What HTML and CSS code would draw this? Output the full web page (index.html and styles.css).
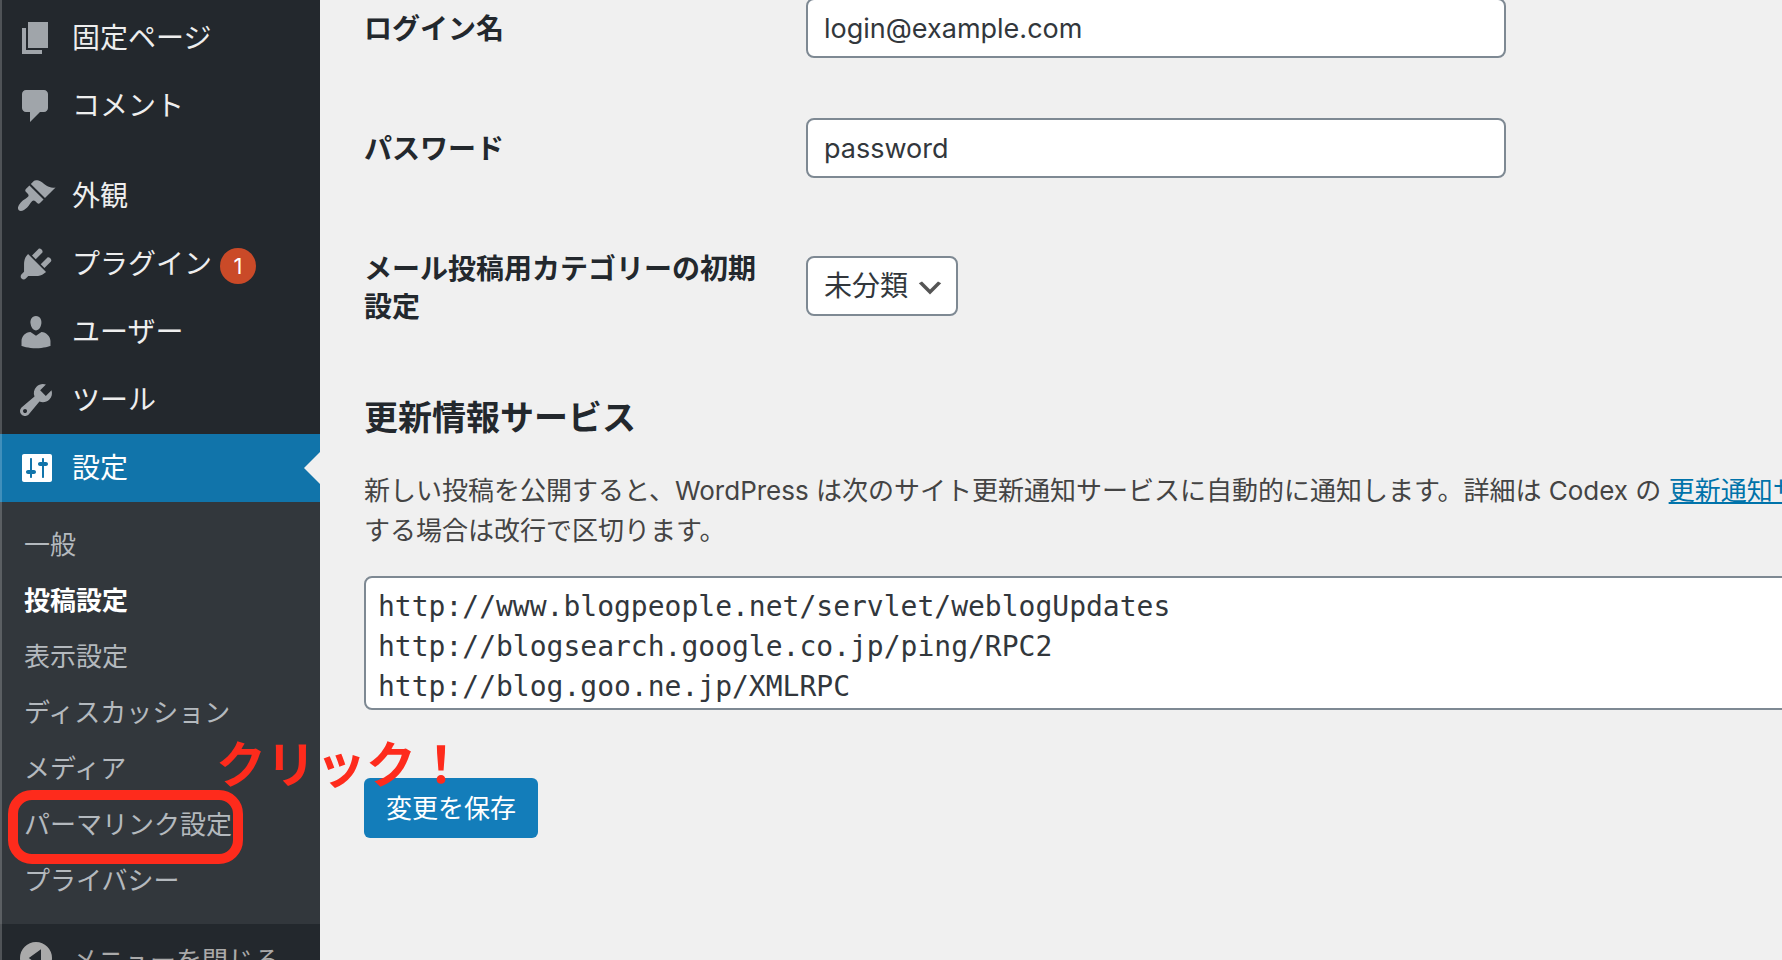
FILE: index.html
```html
<!DOCTYPE html>
<html lang="ja">

<head>
    <meta charset="utf-8">
    <title>投稿設定</title>
    <meta name="viewport" content="width=device-width, initial-scale=1.0">
    <link rel="stylesheet" href="styles.css">
</head>

<body>
    <div class="wrap">
        <nav class="sidebar">
            <ul class="menu">
                <li>
                    <a class="menu-link" href="#">
                        <svg class="icon" viewBox="0 0 20 20"><path d="M6 15V2h10v13H6zm-1 1h8v2H3V5h2v11z"/></svg>
                        固定ページ
                    </a>
                </li>
                <li>
                    <a class="menu-link" href="#">
                        <svg class="icon" viewBox="0 0 20 20"><path d="M5 2h9c1.1 0 2 .9 2 2v7c0 1.1-.9 2-2 2h-2l-5 5v-5H5c-1.1 0-2-.9-2-2V4c0-1.1.9-2 2-2z"/></svg>
                        コメント
                    </a>
                </li>
                <li class="separator"></li>
                <li>
                    <a class="menu-link" href="#">
                        <svg class="icon" viewBox="0 0 20 20"><path d="M14.48 11.06L7.41 3.99l1.5-1.5c.5-.56 2.3-.47 3.51.32 1.21.8 1.43 1.28 2.91 2.1 1.18.64 2.45 1.26 4.45.85zm-.71.71L6.7 4.7 4.93 6.47c-.39.39-.39 1.02 0 1.41l1.06 1.06c.39.39.39 1.03 0 1.42-.6.6-1.43 1.11-2.21 1.69-.35.26-.7.53-1.01.84C1.43 14.23.4 16.08 1.4 17.07c.99 1 2.84-.03 4.18-1.36.31-.31.58-.66.85-1.02.57-.78 1.08-1.61 1.69-2.21.39-.39 1.02-.39 1.41 0l1.06 1.06c.39.39 1.02.39 1.41 0z"/></svg>
                        外観
                    </a>
                </li>
                <li>
                    <a class="menu-link" href="#">
                        <svg class="icon" viewBox="0 0 20 20"><path d="M13.11 4.36L9.87 7.6 8 5.73l3.24-3.24c.35-.34 1.05-.2 1.56.32.52.51.66 1.21.31 1.55zm-8 1.77l.91-1.12 9.01 9.01-1.19.84c-.71.71-2.63 1.16-3.82 1.16H6.14L4.9 17.26c-.59.59-1.54.59-2.12 0-.59-.58-.59-1.53 0-2.12l1.24-1.24v-3.88c0-1.13.4-3.19 1.09-3.89zm7.26 3.97l3.24-3.24c.34-.35 1.04-.21 1.55.31.52.51.66 1.21.31 1.55l-3.24 3.25z"/></svg>
                        プラグイン
                        <span class="badge">1</span>
                    </a>
                </li>
                <li>
                    <a class="menu-link" href="#">
                        <svg class="icon" viewBox="0 0 20 20"><path d="M10 9.25c-2.27 0-2.73-3.44-2.73-3.44C7 4.02 7.82 2 9.97 2c2.16 0 2.98 2.02 2.71 3.81 0 0-.41 3.44-2.68 3.44zm0 2.57L12.72 10c2.39 0 4.52 2.33 4.52 4.53v2.49s-3.65 1.13-7.24 1.13c-3.65 0-7.24-1.13-7.24-1.13v-2.49c0-2.25 1.94-4.48 4.47-4.48z"/></svg>
                        ユーザー
                    </a>
                </li>
                <li>
                    <a class="menu-link" href="#">
                        <svg class="icon" viewBox="0 0 20 20"><path d="M16.68 9.77c-1.34 1.34-3.3 1.67-4.95.99l-5.41 6.52c-.99.99-2.59.99-3.58 0s-.99-2.59 0-3.57l6.52-5.42c-.68-1.65-.35-3.61.99-4.95 1.28-1.28 3.12-1.62 4.72-1.06l-2.89 2.89 2.82 2.82 2.86-2.87c.53 1.58.18 3.39-1.08 4.65zM3.81 16.21c.4.39 1.04.39 1.43 0 .4-.4.4-1.04 0-1.43-.39-.4-1.03-.4-1.43 0-.39.39-.39 1.03 0 1.43z"/></svg>
                        ツール
                    </a>
                </li>
                <li>
                    <a class="menu-link current" href="#">
                        <svg class="icon" viewBox="0 0 20 20"><path d="M18 16V4c0-.55-.45-1-1-1H4c-.55 0-1 .45-1 1v12c0 .55.45 1 1 1h13c.55 0 1-.45 1-1zM8 11h1c.55 0 1 .45 1 1s-.45 1-1 1H8v1.5c0 .28-.22.5-.5.5s-.5-.22-.5-.5V13H6c-.55 0-1-.45-1-1s.45-1 1-1h1V5.5c0-.28.22-.5.5-.5s.5.22.5.5V11zm5-2h-1c-.55 0-1-.45-1-1s.45-1 1-1h1V5.5c0-.28.22-.5.5-.5s.5.22.5.5V7h1c.55 0 1 .45 1 1s-.45 1-1 1h-1v5.5c0 .28-.22.5-.5.5s-.5-.22-.5-.5V9z"/></svg>
                        設定
                    </a>
                    <ul class="submenu">
                        <li><a href="#">一般</a></li>
                        <li><a class="active" href="#">投稿設定</a></li>
                        <li><a href="#">表示設定</a></li>
                        <li><a href="#">ディスカッション</a></li>
                        <li><a href="#">メディア</a></li>
                        <li class="marked">
                            <a href="#">パーマリンク設定</a>
                            <span class="mark-frame"></span>
                            <strong class="mark-text">クリック！</strong>
                        </li>
                        <li><a href="#">プライバシー</a></li>
                    </ul>
                </li>
            </ul>
            <button type="button" class="menu-link collapse">
                <svg class="icon" viewBox="0 0 20 20"><path fill-rule="evenodd" d="M10 2a8 8 0 1 0 0 16a8 8 0 1 0 0-16zM12.500 5.600v8.800L6.400 10z"/></svg>
                メニューを閉じる
            </button>
        </nav>

        <main class="content">
            <form>
                <table class="form-table">
                    <tr>
                        <th><label for="login">ログイン名</label></th>
                        <td><input type="text" id="login" value="login@example.com"></td>
                    </tr>
                    <tr>
                        <th><label for="pass">パスワード</label></th>
                        <td><input type="text" id="pass" value="password"></td>
                    </tr>
                    <tr>
                        <th><label for="category">メール投稿用カテゴリーの初期設定</label></th>
                        <td>
                            <span class="select-box">
                                <select id="category">
                                    <option>未分類</option>
                                </select>
                                <svg class="chevron" viewBox="0 0 20 20"><path d="M5 6l5 5 5-5 2 1-7 7-7-7 2-1z"/></svg>
                            </span>
                        </td>
                    </tr>
                </table>

                <h2>更新情報サービス</h2>
                <p class="description"><label for="ping">新しい投稿を公開すると、WordPress は次のサイト更新通知サービスに自動的に通知します。詳細は Codex の</label> <a href="#">更新通知サービス</a><br>する場合は改行で区切ります。</p>
                <textarea id="ping" rows="3">http://www.blogpeople.net/servlet/weblogUpdates
http://blogsearch.google.co.jp/ping/RPC2
http://blog.goo.ne.jp/XMLRPC</textarea>
                <button type="submit" class="submit">変更を保存</button>
            </form>
        </main>
    </div>
</body>

</html>
```
FILE: styles.css
```css
* {
    box-sizing: border-box;
}

body {
    margin: 0;
    background: #f0f0f0;
    color: #444;
    font-family: Inter, "Noto Sans CJK JP", sans-serif;
    font-size: 26px;
    line-height: 40px;
}

.wrap {
    display: flex;
    height: 100vh;
    overflow: hidden;
}

/* sidebar */

.sidebar {
    position: relative;
    z-index: 1;
    flex: 0 0 320px;
    padding-top: 4px;
    background: #23282d;
}

/* light edge on the left of the menu */
.sidebar::before {
    content: "";
    position: absolute;
    top: 0;
    bottom: 0;
    left: 0;
    z-index: 1;
    width: 2px;
    background: rgba(255, 255, 255, 0.2);
}

.menu,
.submenu {
    margin: 0;
    padding: 0;
    list-style: none;
}

.menu-link {
    position: relative;
    display: flex;
    align-items: center;
    width: 100%;
    height: 68px;
    padding: 0 16px;
    color: #eee;
    font-size: 28px;
    text-decoration: none;
}

.icon {
    width: 40px;
    height: 40px;
    margin-right: 16px;
    fill: #a0a5aa;
}

.separator {
    height: 22px;
}

.badge {
    width: 36px;
    height: 36px;
    margin: 4px 0 0 8px;
    border-radius: 50%;
    background: #ca4a28;
    color: #fff;
    font-size: 22px;
    line-height: 36px;
    text-align: center;
}

.current {
    background: #1174aa;
    color: #fff;
}

.current .icon {
    fill: #fff;
}

.current::after {
    content: "";
    position: absolute;
    top: 18px;
    right: 0;
    border: 16px solid transparent;
    border-left: 0;
    border-right-color: #f0f0f0;
}

.submenu {
    padding: 15px 0;
    background: #32373c;
}

.submenu a {
    display: block;
    padding: 8px 24px;
    color: #b4b9be;
    text-decoration: none;
}

.submenu .active {
    color: #fff;
    font-weight: bold;
}

.marked {
    position: relative;
}

.mark-frame {
    position: absolute;
    top: -7px;
    left: 8px;
    width: 235px;
    height: 74px;
    border: 10px solid #fe2b1c;
    border-radius: 24px;
}

.mark-text {
    position: absolute;
    top: -62px;
    left: 216px;
    color: #fe2b1c;
    font-size: 50px;
    line-height: 60px;
    white-space: nowrap;
}

.collapse {
    border: 0;
    background: none;
    color: #aaa;
    font-family: inherit;
    font-size: 26px;
}

.collapse .icon {
    fill: #aaa;
}

/* settings form */

.content {
    flex: 1;
    min-width: 0;
    padding-left: 44px;
    overflow: hidden;
}

.form-table {
    width: 100%;
    margin-top: -32px;
    border-collapse: collapse;
}

.form-table th {
    width: 422px;
    padding: 42px 20px 38px 0;
    color: #23282d;
    font-size: 28px;
    line-height: 38px;
    text-align: left;
    vertical-align: top;
}

.form-table td {
    padding: 30px 20px;
}

input,
select,
textarea {
    display: block;
    border: 2px solid #7e8993;
    border-radius: 8px;
    background: #fff;
    color: #32373c;
    font-family: inherit;
    font-size: 28px;
}

input {
    width: 700px;
    max-width: 100%;
    height: 60px;
    padding: 0 16px;
    font-size: 27px;
}

.select-box {
    position: relative;
    display: inline-block;
    vertical-align: middle;
}

select {
    width: 152px;
    height: 60px;
    padding: 0 48px 0 16px;
    appearance: none;
}

.chevron {
    position: absolute;
    top: 16px;
    right: 12px;
    width: 32px;
    height: 32px;
    fill: #555;
    pointer-events: none;
}

h2 {
    margin: 35px 0 34px;
    color: #23282d;
    font-size: 34px;
    line-height: 38px;
}

.description {
    margin: 0 0 25px;
    white-space: nowrap;
}

.description a {
    color: #0073aa;
}

textarea {
    width: 110%;
    height: 134px;
    padding: 9px 12px 3px;
    font-family: "DejaVu Sans Mono", monospace;
    line-height: 40px;
    resize: none;
    overflow: hidden;
}

.submit {
    height: 60px;
    margin-top: 68px;
    padding: 0 22px 3px;
    border: 0;
    border-radius: 6px;
    background: #137dba;
    color: #fff;
    font-family: inherit;
    font-size: 26px;
}
```
